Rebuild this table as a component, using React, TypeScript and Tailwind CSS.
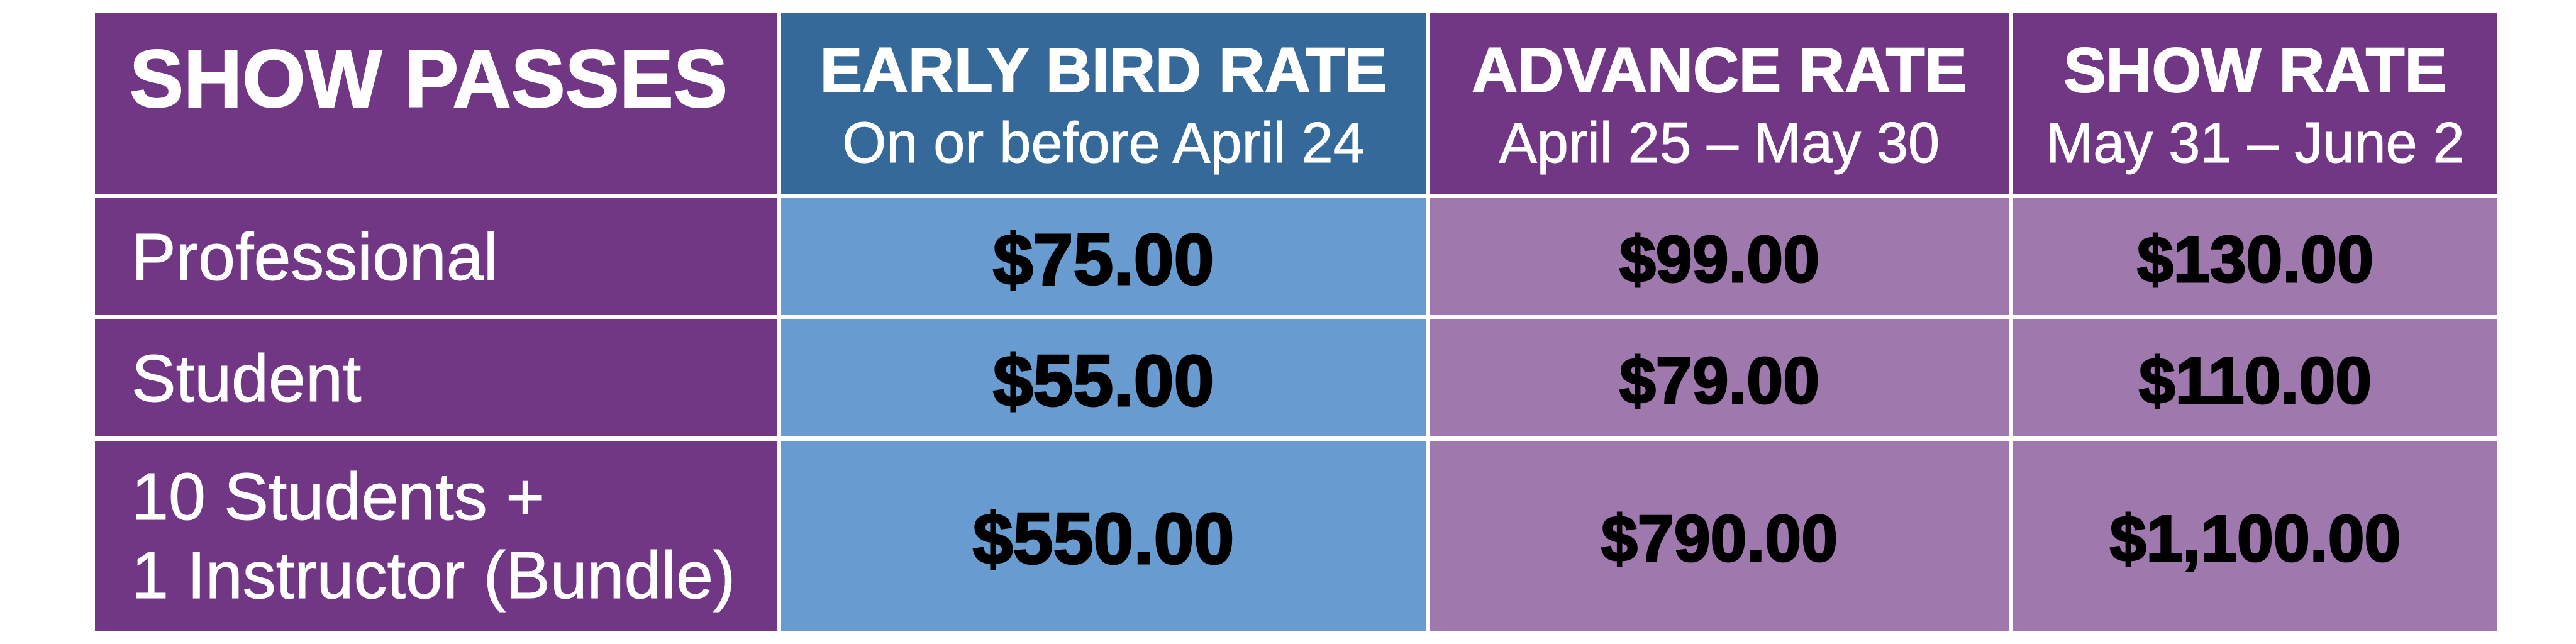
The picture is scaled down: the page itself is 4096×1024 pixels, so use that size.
const rows = [
  { label: ['Professional'], early: '$75.00', advance: '$99.00', show: '$130.00' },
  { label: ['Student'], early: '$55.00', advance: '$79.00', show: '$110.00' },
  { label: ['10 Students +', '1 Instructor (Bundle)'], early: '$550.00', advance: '$790.00', show: '$1,100.00' },
];

const headers = [
  { title: 'EARLY BIRD RATE', sub: 'On or before April 24', bg: 'bg-[#35699a]' },
  { title: 'ADVANCE RATE', sub: 'April 25 – May 30', bg: 'bg-[#713784]' },
  { title: 'SHOW RATE', sub: 'May 31 – June 2', bg: 'bg-[#713784]' },
];

export default function App() {
  return (
    <div
      className="w-[4096px] h-[1024px] bg-white overflow-hidden"
      style={{ fontFamily: '"Liberation Sans", Arial, sans-serif' }}
    >
      <div className="ml-[151px] pt-[21px]">
        <div className="grid grid-cols-[1084px_1025px_920px_770px] grid-rows-[287px_186px_186px_302px] gap-[7px]">
          {/* Header row */}
          <div className="bg-[#713784] pl-[55px] pt-[46px]">
            <h1 className="text-white font-bold text-[129px] leading-[116px] whitespace-nowrap [-webkit-text-stroke:2px_#fff]">
              SHOW PASSES
            </h1>
          </div>
          {headers.map((h) => (
            <div key={h.title} className={`${h.bg} flex flex-col items-center pt-[32px] text-white`}>
              <div className="font-bold text-[101px] leading-[116px] whitespace-nowrap [-webkit-text-stroke:2px_#fff]">{h.title}</div>
              <div className="text-[90px] leading-[116px] whitespace-nowrap [-webkit-text-stroke:1px_#fff]">{h.sub}</div>
            </div>
          ))}

          {/* Price rows */}
          {rows.map((r) => (
            <div key={r.early} className="contents">
              <div className="bg-[#713784] flex flex-col justify-center pl-[58px] text-white text-[106px] leading-[125px] [-webkit-text-stroke:1px_#fff]">
                {r.label.map((l) => (
                  <div key={l} className="whitespace-nowrap">{l}</div>
                ))}
              </div>
              <div className="bg-[#689bd0] flex items-center justify-center pt-[8px]">
                <span className="font-bold text-[115px] leading-none text-black [-webkit-text-stroke:3px_#000]">{r.early}</span>
              </div>
              <div className="bg-[#9f78ad] flex items-center justify-center pt-[8px]">
                <span className="font-bold text-[104px] leading-none text-black [-webkit-text-stroke:3px_#000]">{r.advance}</span>
              </div>
              <div className="bg-[#9f78ad] flex items-center justify-center pt-[8px]">
                <span className="font-bold text-[104px] leading-none text-black [-webkit-text-stroke:3px_#000]">{r.show}</span>
              </div>
            </div>
          ))}
        </div>
      </div>
    </div>
  );
}
